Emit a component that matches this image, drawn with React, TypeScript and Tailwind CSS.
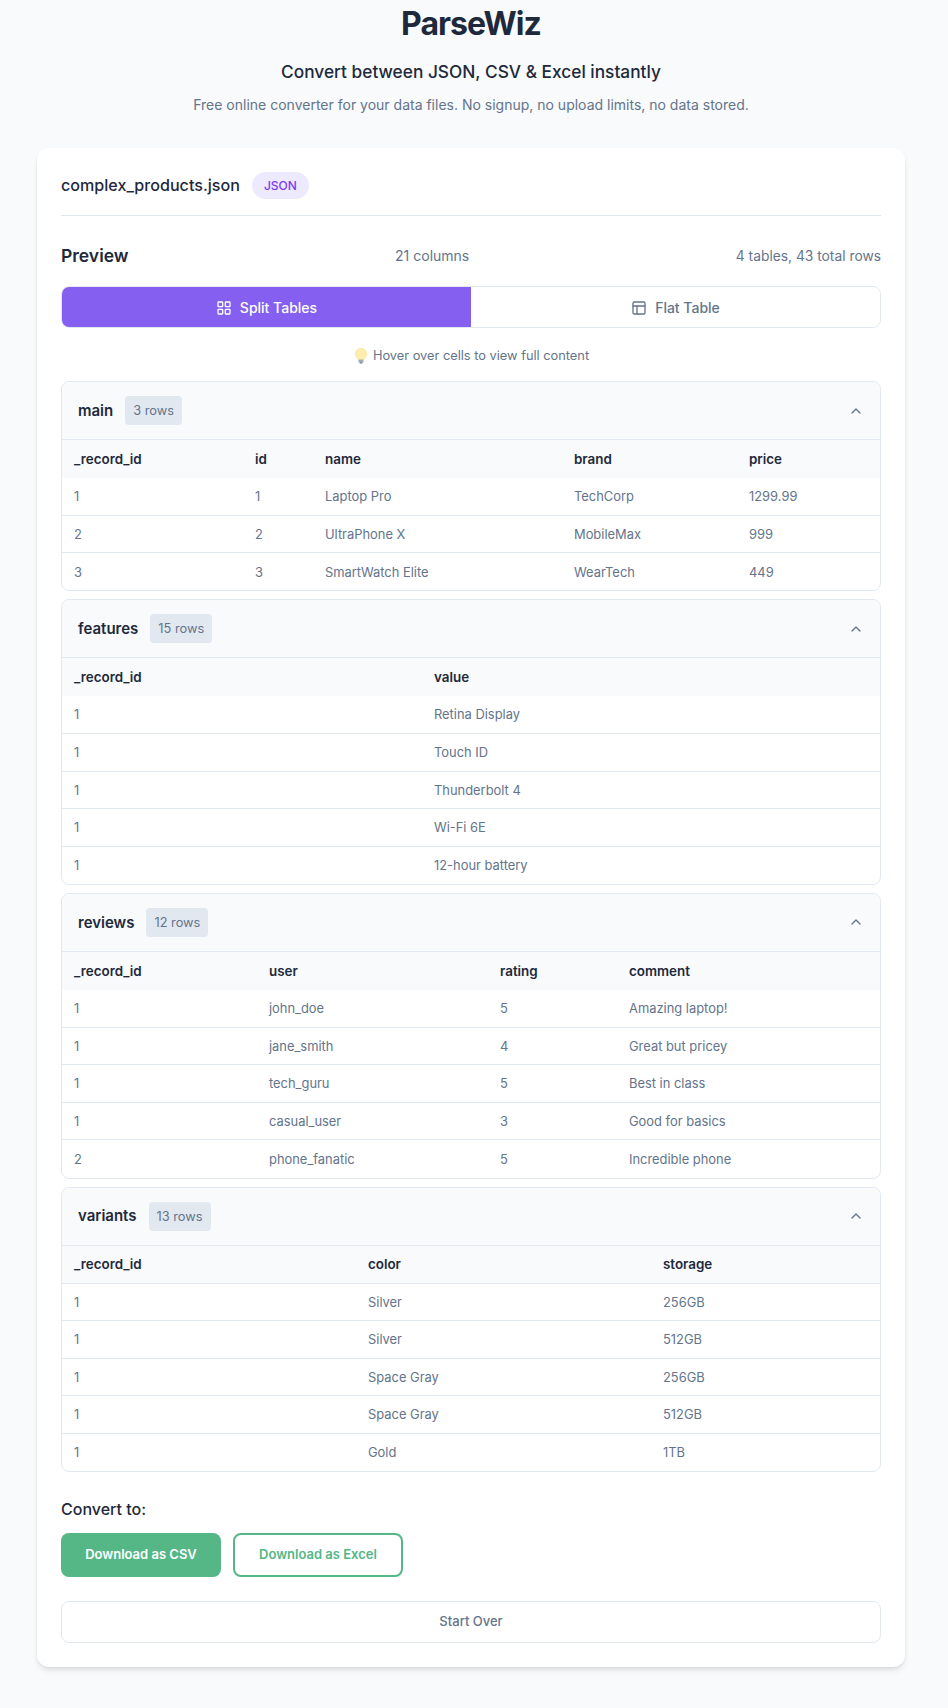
import { LayoutGrid, PanelsTopLeft, ChevronUp } from "lucide-react";

type T = { name: string; count: string; widths: string[]; head: string[]; rows: string[][]; headClass: string };

const tables: T[] = [
  {
    name: "main",
    count: "3 rows",
    widths: ["w-[181px]", "w-[70px]", "w-[249px]", "w-[175px]", "w-auto"],
    head: ["_record_id", "id", "name", "brand", "price"],
    headClass: "h-[37.6px] bg-[#f8fafc]",
    rows: [
      ["1", "1", "Laptop Pro", "TechCorp", "1299.99"],
      ["2", "2", "UltraPhone X", "MobileMax", "999"],
      ["3", "3", "SmartWatch Elite", "WearTech", "449"],
    ],
  },
  {
    name: "features",
    count: "15 rows",
    widths: ["w-[360px]", "w-auto"],
    head: ["_record_id", "value"],
    headClass: "h-[37.6px] bg-[#f8fafc]",
    rows: [
      ["1", "Retina Display"],
      ["1", "Touch ID"],
      ["1", "Thunderbolt 4"],
      ["1", "Wi-Fi 6E"],
      ["1", "12-hour battery"],
    ],
  },
  {
    name: "reviews",
    count: "12 rows",
    widths: ["w-[195px]", "w-[231px]", "w-[129px]", "w-auto"],
    head: ["_record_id", "user", "rating", "comment"],
    headClass: "h-[37.6px] bg-[#f8fafc]",
    rows: [
      ["1", "john_doe", "5", "Amazing laptop!"],
      ["1", "jane_smith", "4", "Great but pricey"],
      ["1", "tech_guru", "5", "Best in class"],
      ["1", "casual_user", "3", "Good for basics"],
      ["2", "phone_fanatic", "5", "Incredible phone"],
    ],
  },
  {
    name: "variants",
    count: "13 rows",
    widths: ["w-[294px]", "w-[295px]", "w-auto"],
    head: ["_record_id", "color", "storage"],
    headClass: "h-[37.6px] border-b border-[#e2e8f0] bg-[#f8fafc]",
    rows: [
      ["1", "Silver", "256GB"],
      ["1", "Silver", "512GB"],
      ["1", "Space Gray", "256GB"],
      ["1", "Space Gray", "512GB"],
      ["1", "Gold", "1TB"],
    ],
  },
];

function Bulb() {
  return (
    <svg width="12" height="16" viewBox="0 0 12 16" className="shrink-0">
      <path d="M6 0.4a5.5 5.5 0 0 0-5.5 5.5c0 2.3 1.8 3.3 2.4 5.4h6.2c.6-2.1 2.4-3.1 2.4-5.4A5.5 5.5 0 0 0 6 .4z" fill="#fdeeb0" stroke="#fbdc78" strokeWidth="0.7" />
      <rect x="3.4" y="11.4" width="5.2" height="3" rx="1" fill="#a3adba" />
      <rect x="4.6" y="14.3" width="2.8" height="1.3" rx="0.6" fill="#6b7686" />
    </svg>
  );
}

function TableCard({ t }: { t: T }) {
  return (
    <section className="overflow-hidden rounded-lg border border-[#e2e8f0]">
      <div className="flex h-[58px] items-center justify-between border-b border-[#e2e8f0] bg-[#f8fafc] pl-4 pr-4">
        <div className="flex items-center gap-3">
          <h3 className="pt-px text-[15px] font-semibold text-[#1e293b]">{t.name}</h3>
          <span className="rounded bg-[#e2e8f0] px-2 py-1 text-[12.8px] leading-[21px] text-[#64748b]">{t.count}</span>
        </div>
        <ChevronUp size={16} strokeWidth={2} className="text-[#64748b]" />
      </div>
      <table className="w-full table-fixed border-collapse text-left">
        <colgroup>
          {t.widths.map((w, i) => (
            <col key={i} className={w} />
          ))}
        </colgroup>
        <thead>
          <tr className={t.headClass}>
            {t.head.map((h) => (
              <th key={h} className="px-3 text-[13.4px] font-semibold text-[#1e293b]">{h}</th>
            ))}
          </tr>
        </thead>
        <tbody>
          {t.rows.map((r, i) => (
            <tr key={i} className="h-[37.6px] border-b border-[#e2e8f0] last:border-b-0">
              {r.map((c, j) => (
                <td key={j} className="px-3 pt-px text-[12.9px] text-[#64748b]">{c}</td>
              ))}
            </tr>
          ))}
        </tbody>
      </table>
    </section>
  );
}

export default function App() {
  return (
    <div className="min-h-[1708px] bg-[#f8fafc] pl-[37px] pr-[43px] font-['Inter',sans-serif]">
      <header className="text-center">
        <h1 className="pt-1 text-[32px] font-bold leading-[40px] tracking-[-0.03em] text-[#1e293b]">ParseWiz</h1>
        <p className="mt-[14px] text-[17.3px] font-medium leading-7 text-[#1e293b]">Convert between JSON, CSV &amp; Excel instantly</p>
        <p className="mt-2 text-sm leading-[22px] text-[#64748b]">Free online converter for your data files. No signup, no upload limits, no data stored.</p>
      </header>
      <main className="mt-8 rounded-xl bg-white p-6 shadow-[0_4px_6px_-1px_rgba(0,0,0,0.1),0_2px_4px_-2px_rgba(0,0,0,0.1)]">
        <div className="flex items-center gap-3 border-b border-[#e2e8f0] pb-4">
          <span className="text-[16.1px] font-medium text-[#1e293b]">complex_products.json</span>
          <span className="rounded-full bg-[#ede9fe] px-3 py-1 text-xs font-medium leading-[19px] text-[#7c3aed]">JSON</span>
        </div>
        <div className="mt-[26px] flex items-center justify-between">
          <h2 className="text-[17.5px] font-semibold leading-7 text-[#1e293b]">Preview</h2>
          <span className="text-sm text-[#64748b]">21 columns</span>
          <span className="text-[13.8px] text-[#64748b]">4 tables, 43 total rows</span>
        </div>
        <div className="mt-4 grid grid-cols-2 overflow-hidden rounded-lg border border-[#e2e8f0]">
          <button className="flex h-[40px] items-center justify-center gap-2 bg-[#8560f0] pt-px text-sm font-medium text-white">
            <LayoutGrid size={16} strokeWidth={2} />
            Split Tables
          </button>
          <button className="flex h-[40px] items-center justify-center gap-2 bg-white pt-px text-sm font-medium text-[#64748b]">
            <PanelsTopLeft size={16} strokeWidth={2} />
            Flat Table
          </button>
        </div>
        <p className="mt-[18px] flex items-center justify-center gap-1.5 pl-[2px] text-[12.8px] leading-5 text-[#64748b]">
          <Bulb />
          Hover over cells to view full content
        </p>
        <div className="mt-[15px] flex flex-col gap-2">
          {tables.map((t) => (
            <TableCard key={t.name} t={t} />
          ))}
        </div>
        <h4 className="mt-[25px] text-base font-medium text-[#1e293b]">Convert to:</h4>
        <div className="mt-3 flex gap-3">
          <button className="h-11 w-[160px] rounded-lg bg-[#55b786] text-[13px] font-semibold text-white">Download as CSV</button>
          <button className="h-11 w-[170px] rounded-lg border-2 border-[#55b786] bg-white text-[13px] font-semibold text-[#55b786]">Download as Excel</button>
        </div>
        <button className="mt-6 h-[42px] w-full rounded-lg border border-[#e2e8f0] bg-white text-[13px] font-medium text-[#64748b]">Start Over</button>
      </main>
    </div>
  );
}
